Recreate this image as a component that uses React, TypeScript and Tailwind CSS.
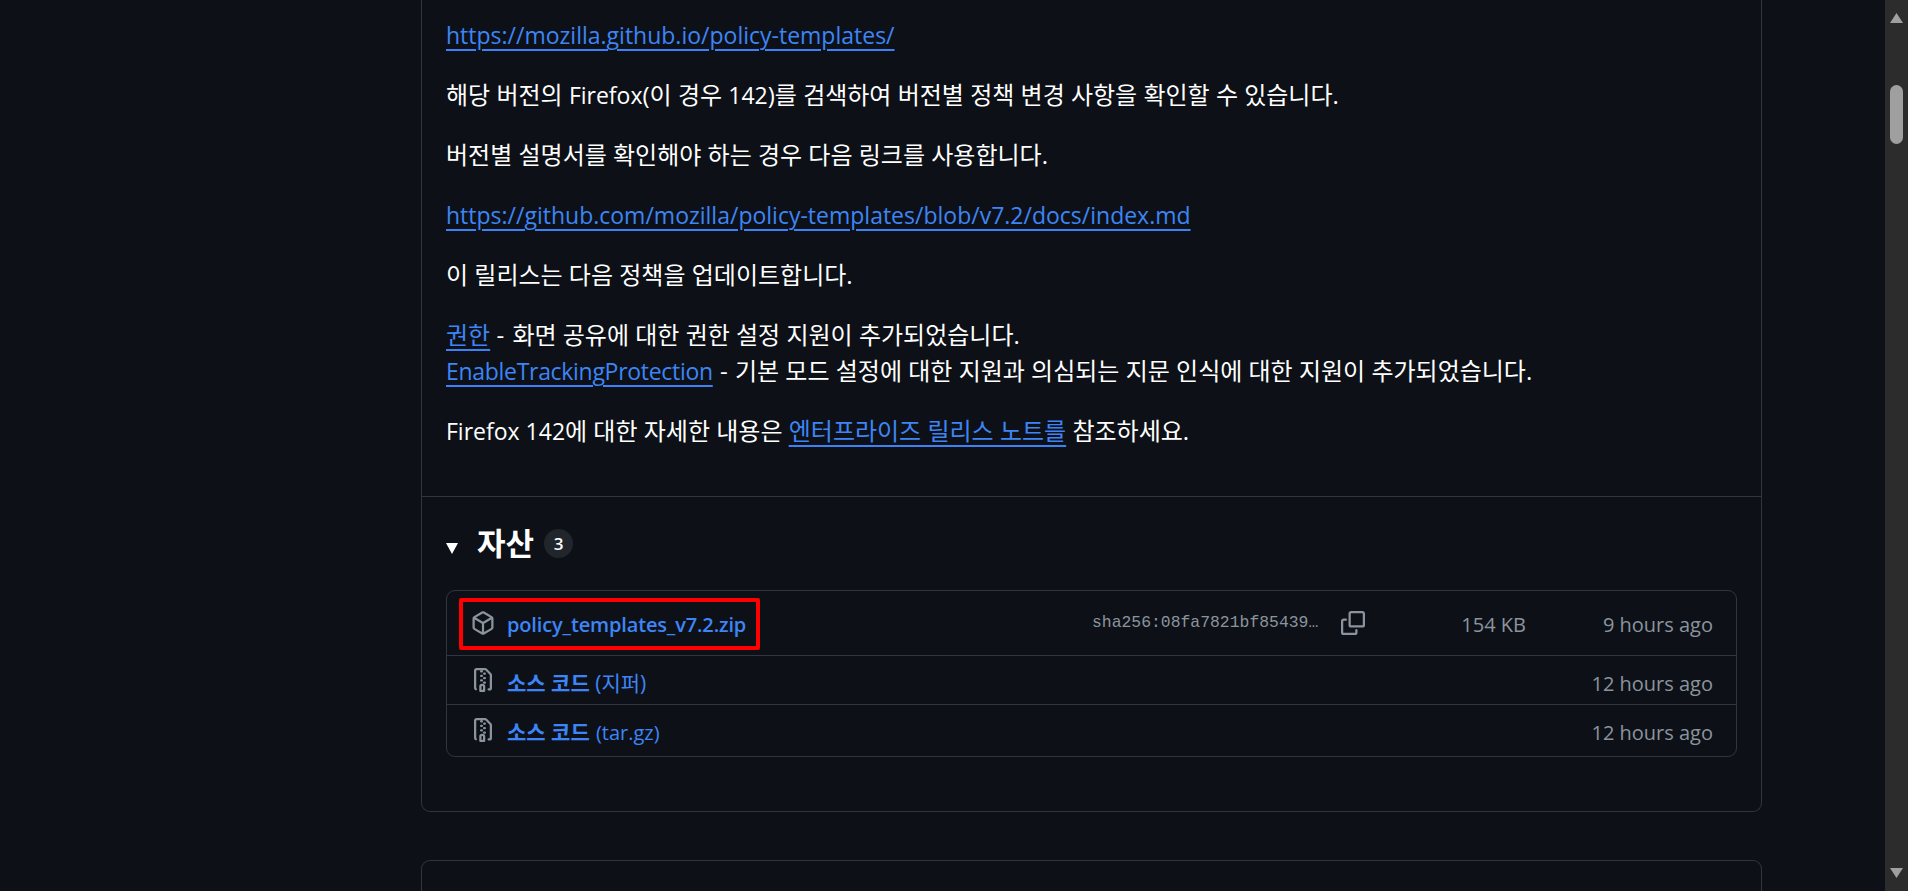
import type { ReactNode } from "react";

const font = { fontFamily: '"Open Sans","Noto Sans CJK KR",sans-serif' };
const link = "text-[#3d85f6] underline decoration-[#3b82f6] decoration-2 underline-offset-[5px]";

function L({ children, className = "" }: { children: ReactNode; className?: string }) {
  return <span className={`text-[23px] ${className}`}>{children}</span>;
}

function PackageIcon() {
  return (
    <svg width="24" height="24" viewBox="0 0 16 16" fill="currentColor">
      <path d="m8.878.392 5.25 3.045c.54.314.872.89.872 1.514v6.098a1.75 1.75 0 0 1-.872 1.514l-5.25 3.045a1.75 1.75 0 0 1-1.756 0l-5.25-3.045A1.75 1.75 0 0 1 1 11.049V4.951c0-.624.332-1.201.872-1.514L7.122.392a1.75 1.75 0 0 1 1.756 0ZM7.875 1.69l-4.63 2.685L8 7.133l4.755-2.758-4.63-2.685a.248.248 0 0 0-.25 0ZM2.5 5.677v5.372c0 .09.047.171.125.216l4.625 2.683V8.432Zm6.25 8.271 4.625-2.683a.25.25 0 0 0 .125-.216V5.677L8.75 8.432Z" />
    </svg>
  );
}

function ZipIcon() {
  return (
    <svg width="24" height="24" viewBox="0 0 16 16" fill="currentColor">
      <path d="M3.5 1.75v11.5c0 .09.048.173.126.217a.75.75 0 0 1-.752 1.298A1.748 1.748 0 0 1 2 13.25V1.75C2 .784 2.784 0 3.75 0h5.586c.464 0 .909.185 1.237.513l2.914 2.914c.329.328.513.773.513 1.237v8.586A1.75 1.75 0 0 1 12.25 15h-.5a.75.75 0 0 1 0-1.5h.5a.25.25 0 0 0 .25-.25V4.664a.25.25 0 0 0-.073-.177L9.513 1.573a.25.25 0 0 0-.177-.073H7.25a.75.75 0 0 1 0 1.5h-.5a.75.75 0 0 1 0-1.5h-3a.25.25 0 0 0-.25.25Zm3.75 8.75h.5c.966 0 1.75.784 1.75 1.75v3a.75.75 0 0 1-.75.75h-2.5a.75.75 0 0 1-.75-.75v-3c0-.966.784-1.75 1.75-1.75ZM6 5.25a.75.75 0 0 1 .75-.75h.5a.75.75 0 0 1 0 1.5h-.5A.75.75 0 0 1 6 5.25Zm.75 2.25h.5a.75.75 0 0 1 0 1.5h-.5a.75.75 0 0 1 0-1.5ZM8 6.75A.75.75 0 0 1 8.75 6h.5a.75.75 0 0 1 0 1.5h-.5A.75.75 0 0 1 8 6.75ZM8.75 3h.5a.75.75 0 0 1 0 1.5h-.5a.75.75 0 0 1 0-1.5ZM8 9.75A.75.75 0 0 1 8.75 9h.5a.75.75 0 0 1 0 1.5h-.5A.75.75 0 0 1 8 9.75Zm-1 2.5v2.25h1v-2.25a.25.25 0 0 0-.25-.25h-.5a.25.25 0 0 0-.25.25Z" />
    </svg>
  );
}

function CopyIcon() {
  return (
    <svg width="24" height="24" viewBox="0 0 16 16" fill="currentColor" className="ml-[21px] text-[#8b949e]">
      <path d="M0 6.75C0 5.784.784 5 1.75 5h1.5a.75.75 0 0 1 0 1.5h-1.5a.25.25 0 0 0-.25.25v7.5c0 .138.112.25.25.25h7.5a.25.25 0 0 0 .25-.25v-1.5a.75.75 0 0 1 1.5 0v1.5A1.75 1.75 0 0 1 9.25 16h-7.5A1.75 1.75 0 0 1 0 14.25Z" />
      <path d="M5 1.75C5 .784 5.784 0 6.75 0h7.5C15.216 0 16 .784 16 1.75v7.5A1.75 1.75 0 0 1 14.25 11h-7.5A1.75 1.75 0 0 1 5 9.25Zm1.75-.25a.25.25 0 0 0-.25.25v7.5c0 .138.112.25.25.25h7.5a.25.25 0 0 0 .25-.25v-7.5a.25.25 0 0 0-.25-.25Z" />
    </svg>
  );
}

function Row({ icon, name, time, h, pad, border, extra }: { icon: ReactNode; name: ReactNode; time: string; h: string; pad: string; border?: boolean; extra?: ReactNode }) {
  return (
    <div className={`relative flex items-center ${h} ${border ? "border-t border-[#30363d]" : ""}`}>
      <div className="w-[60px] flex justify-end pr-[12px] text-[#8b949e]">{icon}</div>
      <div className={`flex-1 ${pad}`}>{name}</div>
      {extra}
      <div className={`w-[210px] text-right text-[20px] text-[#8b949e] pr-[23px] ${pad}`}>{time}</div>
    </div>
  );
}

export default function App() {
  return (
    <div className="flex h-[891px] w-[1908px] overflow-hidden bg-[#0d1117] text-white" style={font}>
      <main className="flex-1 pl-[421px] pr-[123px]">
        <section className="border-x border-b border-[#30363d] rounded-b-[9px] h-[812px]">
          <div className="h-[497px] border-b border-[#30363d] px-[24px] pt-[17px] text-[24px] leading-[36px]">
            <p className="mb-[24px]"><a className={link}><L>https://mozilla.github.io/policy-templates/</L></a></p>
            <p className="mb-[24px]">해당 버전의 <L>Firefox</L>(이 경우 <L>142</L>)를 검색하여 버전별 정책 변경 사항을 확인할 수 있습니다.</p>
            <p className="mb-[24px]">버전별 설명서를 확인해야 하는 경우 다음 링크를 사용합니다.</p>
            <p className="mb-[24px]"><a className={link}><L>https://github.com/mozilla/policy-templates/blob/v7.2/docs/index.md</L></a></p>
            <p className="mb-[24px]">이 릴리스는 다음 정책을 업데이트합니다.</p>
            <p className="mb-[24px]">
              <a className={link}>권한</a> <span className="mr-[2px]">-</span> 화면 공유에 대한 권한 설정 지원이 추가되었습니다.<br />
              <a className={link}><L className="tracking-[-0.3px]">EnableTrackingProtection</L></a> <span className="mx-[1px]">-</span> 기본 모드 설정에 대한 지원과 의심되는 지문 인식에 대한 지원이 추가되었습니다.
            </p>
            <p><L>Firefox 142</L>에 대한 자세한 내용은 <a className={link}>엔터프라이즈 릴리스 노트를</a> 참조하세요.</p>
          </div>
          <div className="px-[24px]">
            <div className="flex items-center h-[93px]">
              <svg width="12" height="12" viewBox="0 0 12 12" className="mr-[19px] mt-[8px]"><path d="M0 1h12L6 12z" fill="#fff" /></svg>
              <h2 className="text-[31px] font-bold">자산</h2>
              <span className="ml-[10px] flex h-[29px] w-[29px] items-center justify-center rounded-full bg-[#21262d] text-[17px] font-semibold">3</span>
            </div>
            <div className="border border-[#30363d] rounded-[9px] h-[167px]">
              <Row
                h="h-[64px]"
                pad="pt-[4px]"
                icon={<PackageIcon />}
                name={<span className="text-[20px] font-semibold tracking-[-0.15px] text-[#3d85f6]">policy_templates_v7.2.zip</span>}
                time="9 hours ago"
                extra={
                  <>
                    <div className="absolute left-[12px] top-[7px] h-[52px] w-[301px] rounded-[2px] border-[4px] border-[#ff0000]" />
                    <span className="w-[228px] text-[16.4px] text-[#8b949e]" style={{ fontFamily: '"Liberation Mono",monospace' }}>sha256:08fa7821bf85439…</span>
                    <CopyIcon />
                    <span className="w-[161px] text-right text-[20px] text-[#8b949e] pt-[4px]">154 KB</span>
                  </>
                }
              />
              <Row
                border
                h="h-[49px]"
                pad="pt-[7px]"
                icon={<ZipIcon />}
                name={<span className="text-[21px] text-[#3d85f6]"><b>소스 코드</b> (지퍼)</span>}
                time="12 hours ago"
              />
              <Row
                border
                h="h-[51px]"
                pad="pt-[5px]"
                icon={<ZipIcon />}
                name={<span className="text-[20px] text-[#3d85f6]"><b className="text-[21px] mr-[1px]">소스 코드</b> (tar.gz)</span>}
                time="12 hours ago"
              />
            </div>
          </div>
        </section>
        <section className="mt-[48px] h-[60px] border-x border-t border-[#30363d] rounded-t-[9px]" />
      </main>
      <aside className="w-[23px] bg-[#2c2c2c] flex flex-col items-center">
        <svg width="15" height="12" viewBox="0 0 15 12" className="mt-[12px]"><path d="M7.5 1L14 11H1z" fill="#a0a0a0" /></svg>
        <div className="mt-[61px] h-[59px] w-[13px] rounded-full bg-[#9f9f9f]" />
        <svg width="15" height="12" viewBox="0 0 15 12" className="mt-auto mb-[12px]"><path d="M1 1h13L7.5 11z" fill="#a0a0a0" /></svg>
      </aside>
    </div>
  );
}
